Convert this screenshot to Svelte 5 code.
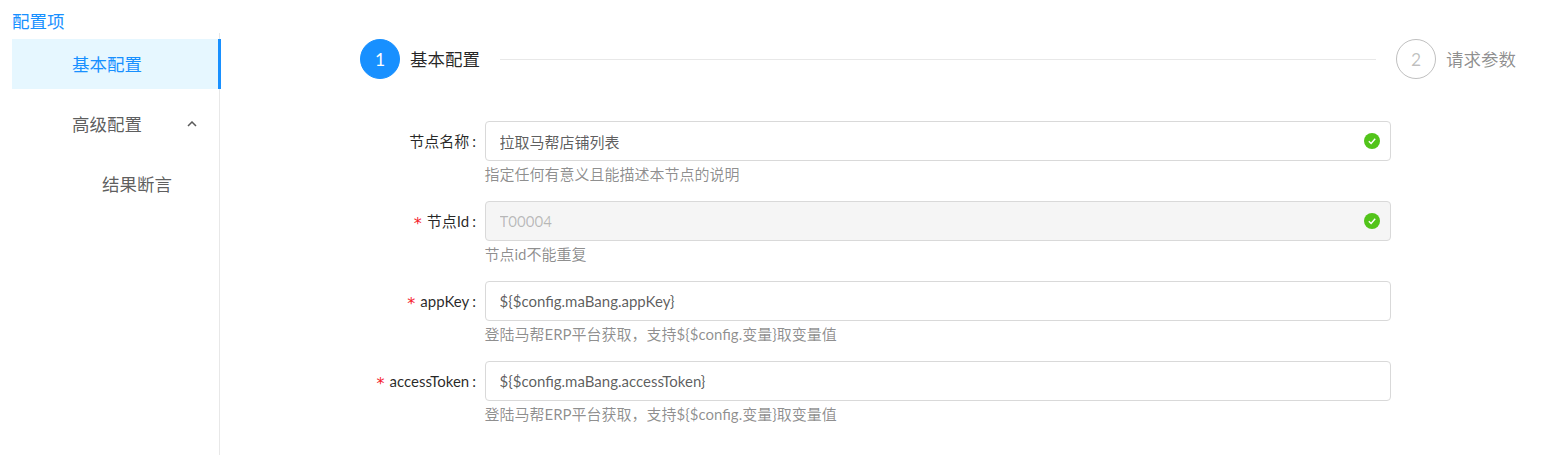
<script lang="ts">
	type Field = {
		label: string;
		value: string;
		hint: string;
		required?: boolean;
		disabled?: boolean;
		valid?: boolean;
	};
	const erpHint = '登陆马帮ERP平台获取，支持${$config.变量}取变量值';
	const fields: Field[] = [
		{ label: '节点名称', value: '拉取马帮店铺列表', hint: '指定任何有意义且能描述本节点的说明', valid: true },
		{ label: '节点Id', value: 'T00004', hint: '节点id不能重复', required: true, disabled: true, valid: true },
		{ label: 'appKey', value: '${$config.maBang.appKey}', hint: erpHint, required: true },
		{ label: 'accessToken', value: '${$config.maBang.accessToken}', hint: erpHint, required: true }
	];
</script>

<div class="page">
	<aside class="side">
		<div class="side-title">配置项</div>
		<nav class="menu">
			<div class="item active">基本配置</div>
			<div class="item">
				高级配置
				<svg class="chevron" width="10" height="6" viewBox="0 0 10 6" aria-hidden="true">
					<path d="M1 5 L5 1 L9 5" fill="none" stroke="#595959" stroke-width="1.5" />
				</svg>
			</div>
			<div class="item sub">结果断言</div>
		</nav>
	</aside>

	<main class="main">
		<div class="steps">
			<div class="step current">
				<span class="dot">1</span>
				<span class="step-title">基本配置</span>
			</div>
			<div class="step-line"></div>
			<div class="step">
				<span class="dot">2</span>
				<span class="step-title">请求参数</span>
			</div>
		</div>

		<form class="form">
			{#each fields as f}
				<label class="row">
					<span class="label">
						{#if f.required}<span class="req">*</span>{/if}{f.label}<span class="colon">:</span>
					</span>
					<span class="control">
						<span class="input-wrap">
							<input class="input" value={f.value} disabled={f.disabled} />
							{#if f.valid}
								<svg class="ok" width="16" height="16" viewBox="0 0 16 16" aria-hidden="true">
									<circle cx="8" cy="8" r="8" fill="#52c41a" />
									<path d="M4.8 8.2 L7.1 10.4 L11.2 5.8" fill="none" stroke="#fff" stroke-width="1.4" />
								</svg>
							{/if}
						</span>
						<span class="hint">{f.hint}</span>
					</span>
				</label>
			{/each}
		</form>
	</main>
</div>

<style>
	:global(body) {
		margin: 0;
		background: #fff;
	}
	.page {
		display: flex;
		height: 455px;
		padding-left: 12px;
		overflow: hidden;
		box-sizing: border-box;
		font-family: Lato, 'Noto Sans CJK SC', sans-serif;
		color: rgba(0, 0, 0, 0.65);
	}
	.side {
		display: flex;
		flex-direction: column;
		flex: none;
		width: 208px;
	}
	.side-title {
		height: 33px;
		padding-top: 11px;
		box-sizing: border-box;
		font-size: 17.5px;
		line-height: 22px;
		color: #1890ff;
	}
	.menu {
		flex: 1;
		padding-top: 6px;
		border-right: 1px solid #e8e8e8;
	}
	.item {
		display: flex;
		align-items: center;
		height: 50px;
		box-sizing: border-box;
		margin-bottom: 10px;
		padding-bottom: 2px;
		padding-left: 60px;
		font-size: 17.5px;
		color: rgba(0, 0, 0, 0.65);
	}
	.item.active {
		width: 209px;
		background: #e6f7ff;
		border-right: 3px solid #1890ff;
		color: #1890ff;
	}
	.item.sub {
		padding-left: 90px;
	}
	.chevron {
		margin-left: 45px;
		margin-top: 2px;
	}
	.main {
		flex: 1;
		min-width: 0;
		padding: 39px 28px 0 140px;
	}
	.steps {
		display: flex;
		align-items: center;
	}
	.step {
		display: flex;
		align-items: center;
		gap: 10px;
		font-size: 17.5px;
		color: rgba(0, 0, 0, 0.45);
	}
	.step-title {
		width: 71px;
		margin-top: -2px;
		white-space: nowrap;
	}
	.current .step-title {
		width: 70px;
	}
	.dot {
		display: flex;
		align-items: center;
		justify-content: center;
		width: 40px;
		height: 40px;
		box-sizing: border-box;
		border: 1px solid rgba(0, 0, 0, 0.25);
		border-radius: 50%;
		font-size: 17.5px;
		color: rgba(0, 0, 0, 0.25);
	}
	.step.current {
		color: rgba(0, 0, 0, 0.85);
	}
	.current .dot {
		background: #1890ff;
		border-color: #1890ff;
		color: #fff;
	}
	.step-line {
		flex: 1;
		height: 1px;
		margin: 0 20px;
		background: #e8e8e8;
	}
	.form {
		margin-top: 42px;
	}
	.row {
		display: flex;
		height: 80px;
	}
	.label {
		flex: none;
		width: 125px;
		height: 40px;
		box-sizing: border-box;
		padding-right: 9px;
		text-align: right;
		font-size: 15px;
		line-height: 40px;
		color: rgba(0, 0, 0, 0.85);
		white-space: nowrap;
	}
	.req {
		margin-right: 5px;
		font-family: 'DejaVu Sans', sans-serif;
		font-size: 16px;
		line-height: 1;
		vertical-align: -2px;
		color: #f5222d;
	}
	.colon {
		margin-left: 3px;
	}
	.control {
		display: flex;
		flex-direction: column;
		width: 906px;
	}
	.input-wrap {
		position: relative;
		display: block;
		height: 40px;
	}
	.input {
		display: block;
		width: 100%;
		height: 40px;
		box-sizing: border-box;
		padding: 0 14px 0 13.5px;
		border: 1px solid #d9d9d9;
		border-radius: 4px;
		background: #fff;
		font: inherit;
		font-size: 15px;
		color: rgba(0, 0, 0, 0.65);
		outline: none;
	}
	.input:disabled {
		background: #f5f5f5;
		color: rgba(0, 0, 0, 0.25);
	}
	.ok {
		position: absolute;
		top: 12px;
		right: 11px;
	}
	.hint {
		margin-left: -0.5px;
		font-size: 15px;
		line-height: 27px;
		color: rgba(0, 0, 0, 0.45);
	}
</style>
